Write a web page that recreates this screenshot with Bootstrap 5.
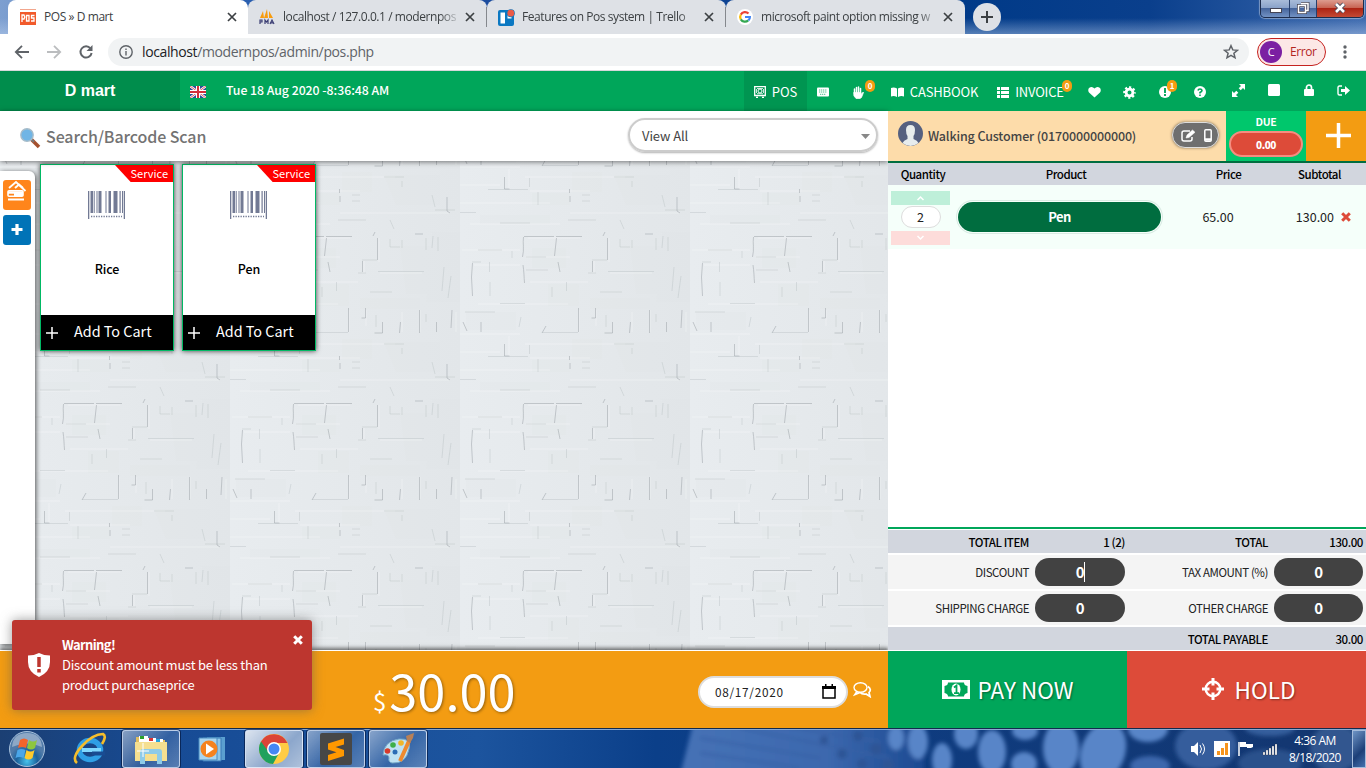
<!DOCTYPE html>
<html lang="en">
<head>
<meta charset="utf-8">
<meta name="viewport" content="width=device-width, initial-scale=1">
<title>POS » D mart</title>
<link href="https://cdn.jsdelivr.net/npm/bootstrap@5.3.0/dist/css/bootstrap.min.css" rel="stylesheet">
<style>
:root{--app:"Noto Sans CJK SC","Open Sans",sans-serif;--ui:"Open Sans","Noto Sans",sans-serif}
html,body{height:768px;overflow:hidden}
body{font-family:var(--app);font-size:13px;line-height:20px;color:#222;width:1366px}
svg{display:block;flex:none}
.t{white-space:nowrap;flex:none}
/* browser chrome */
.strip{height:34px;background:linear-gradient(180deg,rgba(255,255,255,0) 18px,rgba(190,210,240,.45) 34px),linear-gradient(90deg,#7d9fd0 0,#2a5fb0 240px,#1c4c9e 480px,#003a88 960px,#0a3f8c 1150px,#3c69ae 1366px);font-family:var(--ui);font-size:12px;color:#3c4043}
.tb{height:34px;width:239px;background:#dee1e6;border-radius:8px 8px 0 0;padding-left:16px}
.tb.cur{background:#fff;width:240px;margin-left:8px;padding-left:12px}
.tb .cap{width:178px;letter-spacing:-.43px;-webkit-mask-image:linear-gradient(90deg,#000 88%,transparent)}
.tb.cur .cap{width:175px;-webkit-mask-image:none}
.sepr{width:1px;height:20px;background:#85888d;margin-left:-1px;align-self:center;z-index:2}
.newtab{width:28px;height:28px;border-radius:50%;background:#dee1e6;margin:3px 0 0 8px}
.winbtns{width:104px;height:18px;margin:0 2px 0 auto;border:1px solid #1d2c4c;border-top:0;border-radius:0 0 5px 5px;overflow:hidden;box-shadow:0 0 1px 1px rgba(255,255,255,.4)}
.winbtns>div{background:linear-gradient(#a9bcd9 0,#8ba3ca 45%,#46659c 50%,#7292c4);border-right:1px solid #28406c}
.winbtns>.cls{background:linear-gradient(#dd9c8f 0,#c86554 45%,#ad2414 50%,#c44a34);border:0}
.bar{height:36px;background:#fff;font-family:var(--ui);font-size:14px}
.url{height:28px;width:1141px;border-radius:14px;background:#f1f3f4;margin-left:10px;letter-spacing:-.38px;color:#5f6368}
.err{width:69px;height:28px;border:1px solid #c5221f;border-radius:14px;background:#fce8e6;color:#b3261e;font-size:12px;letter-spacing:-.4px;margin-left:8px}
.ava{width:22px;height:22px;border-radius:50%;background:#7b1fa2;color:#fff;font-size:11px;line-height:22px;margin-left:2px}
/* application header */
.top{height:41px;border-top:1px solid #d6d8da;background:#00a65a;color:#fff;font-size:13px}
.brand{width:180px;background:#008d4c;font:bold 16px "Liberation Sans",sans-serif}
.top .it{display:flex;align-items:center;justify-content:center;position:relative;height:40px;padding-top:2px;flex:none}
.on{background:#009551}
.bdg{position:absolute;top:9px;width:10px;height:12px;border-radius:5px;background:#f39c12;font:bold 8px/12px var(--app);text-align:center}
/* left side */
.left{width:888px;height:617px}
.find{height:50px;background:#fff;box-shadow:0 1px 5px rgba(0,0,0,.5);position:relative;z-index:2}
.find .ph{font-size:16px;font-weight:500;color:#737373;letter-spacing:-.1px}
.sel{width:250px;height:34px;border:2px solid #ccc;border-radius:17px;box-shadow:0 1px 2px rgba(0,0,0,.3);color:#444;letter-spacing:-.1px}
.wall{height:490px;background:#e5e9ec url("data:image/svg+xml,%3Csvg xmlns='http://www.w3.org/2000/svg' width='230' height='167'%3E%3Cdefs%3E%3ClinearGradient id='g'%3E%3Cstop stop-color='%23e8ecef'/%3E%3Cstop offset='1' stop-color='%23e2e6e9'/%3E%3C/linearGradient%3E%3Cfilter id='b'%3E%3CfeGaussianBlur stdDeviation='.45'/%3E%3C/filter%3E%3C/defs%3E%3Crect width='230' height='167' fill='url(%23g)'/%3E%3Cg fill='%23dde1e4' opacity='.22'%3E%3Cpath d='M72 16h34v20H72zM170 14h44v48h-38zM88 52h31v22H88zM202 0h28v70h-34zM130 66h60v11h-60zM6 80h50v18H6zM112 107h30v20h-30zM154 110h56v30h-44zM72 128h38v12H72zM20 150h70v9H20z'/%3E%3C/g%3E%3Cg fill='none' stroke='%23fff' stroke-opacity='.3' filter='url(%23b)'%3E%3Cpath d='M2 18h58M68 6h52M66 25h44M14 33h46M70 50h58M18 72h90M150 41h42M0 102h60M65 112h100M0 120h40M70 126h60M0 138h90M110 148h110M10 159h90M49 104v20M119 78v22M136 78v16M190 78v22M172 80v20M226 80v20M149 6v24M134 29v12'/%3E%3C/g%3E%3Cg fill='none' stroke='%239aa0a6' stroke-opacity='.5' filter='url(%23b)'%3E%3Cpath d='M64 4.500h30M96 4.500h26M63.500 5c-1 6 1 12-1 20M63 33c1 6 1 12 1.500 18M96.500 6l-2 18M98 30l2 10M12.500 31l-1 14 1 19M147.500 6v22M132.500 29v11M145 0l-2 4M185 2h8M118.500 76v24M135.500 76v10h-4M152.500 90v11h-8M170.500 90l-1 11M189.500 78v23M206.500 90v10M222 78l-1 18M86 94l-4 7M21 90v10M3 90l4 9M44.500 112v12h5M109.500 124v4M110 131v6M217 132v14l3 2'/%3E%3C/g%3E%3Cg fill='none' stroke='%23b0b6bb' stroke-opacity='.35' filter='url(%23b)'%3E%3Cpath d='M0 147.500h16M12 30h9M29.500 30v10M66 25h20M66 38h22M132 28h15M148 39.500h46M160 7v8h10M172 8v8M196 6v12M203 4l-1 12M208 5v14M214 35l-2 24M221 44l-3 22M40 71.500h25M92 55v10M106.500 50v9M5 80h30M82 100.500h36M28 124.500h40M69.500 113v9M78 127v13M122 130h8M122 136h8M154 112h20M172 116v6M202 130l3 12M205 145h20M160 155l4 9M40 158h30M18 18h24M52 19v7M128 41h8M146 83v12M196 82v8M108 155h28M61 85l-2 10M140 60h22M30 50v14'/%3E%3C/g%3E%3C/svg%3E") 0 71px}
.side{width:35px;height:473px;margin-top:10px;background:#fff;border-radius:0 6px 0 0;box-shadow:1px 1px 5px rgba(0,0,0,.65);padding:9px 0 0 3px}
.side>div{width:28px;height:30px;border-radius:3px;margin-bottom:5px}
.goods{padding:3px 0 0 5px;gap:8px}
.item{width:134px;height:187px;border:1.500px solid #00b964;background:#fff;box-shadow:0 0 5px rgba(0,0,0,.75);position:relative}
.rib{position:absolute;right:0;top:0;width:58px;height:17px;background:red;clip-path:polygon(0 0,100% 0,100% 100%,27% 100%);color:#fff;font-size:11px;line-height:17px;text-align:right;padding-right:5px}
.item .nm{font-weight:500;color:#000;margin-top:40px;font-size:12.500px;letter-spacing:-.1px}
.cartb{height:35px;background:#000;color:#fff;font-size:14.400px;padding-bottom:3px}
.foot{height:77px;background:#f39c12;color:#fff;position:relative}
.wall + .foot{box-shadow:0 -1px 0 #fff,0 -3px 4px rgba(0,0,0,.55);z-index:3}
.amt{font-size:50.500px;line-height:60px;text-shadow:1px 1px 3px rgba(0,0,0,.4)}
.date{width:150px;height:32px;border:2px solid #ddd;border-radius:16px;background:#fff;color:#222}
.toastx{position:absolute;left:12px;top:-31px;width:300px;height:90px;border-radius:3px;background:#bd362f;box-shadow:0 0 12px rgba(90,90,90,.6);letter-spacing:-.23px}
.toastx b{letter-spacing:-.65px}
/* right side */
.right{width:478px;height:617px;background:#fff;position:relative;z-index:4}
.cust{height:52px;border-bottom:2px solid #006d3f}
.who{width:338px;background:#fddcaa;font-weight:500;color:#444}
.who .t{font-size:12.500px;letter-spacing:-.14px}
.edit{width:47px;height:26px;border:1px solid #ddd;border-radius:13px;background:#6f6f6f;box-shadow:0 0 3px rgba(0,0,0,.5)}
.due{width:80px;background:#00c76c;color:#fff;font-weight:700;font-size:10.500px;letter-spacing:-.3px}
.due b{display:block;width:74px;height:26px;margin:0 3px;border:2px solid #f58d80;border-radius:13px;background:#dd4b39;line-height:23px;font-size:10px;letter-spacing:-.5px}
.hd{height:22px;background:#d2d6de;font-weight:500;font-size:11.500px;letter-spacing:-.45px;color:#000}
.ln{height:64px;background:#f5fffa}
.qty .up,.qty .dn{width:59px;height:14px;background:#beefd9}
.qty .dn{background:#fddcda}
.qty .n{width:40px;height:22px;border:1px solid #ddd;border-radius:11px;background:#fff;margin:1px 0 3px;line-height:20px;font-size:12.500px}
.pen{width:203px;height:30px;border-radius:15px;background:#006d3f;color:#fff;font-weight:700;letter-spacing:-.5px;box-shadow:0 0 0 1px #f5fffa,0 0 0 2px #d9ebe3;line-height:30px}
.sum{border-top:2px solid #00a65a;padding-top:1px;gap:2px;font-size:11.500px;letter-spacing:-.42px}
.sum .rw{height:34px;background:#f4f4f4}
.sum .g{height:23px;background:#d2d6de;color:#000;font-weight:500}
.sum .lb{width:141px;text-align:right}
.sum .lb + *{margin-left:6px}
.sum .vl{width:90px;text-align:right}
.sum .lb2{width:143px;text-align:right}
.sum .lb2 + *{margin-left:6px;width:89px}
.fld{height:28px;width:90px;background:#424242;border-radius:14px;color:#fff;font-weight:700;font-size:15px;text-align:center;line-height:28px}
.act{height:77px;color:#fff;font-size:22.500px;text-shadow:1px 1px 2px rgba(0,0,0,.4)}
.act>div{padding-bottom:1px}
.pay{width:239px;background:#00a65a}.hold{width:239px;background:#dd4b39}
/* taskbar */
.task{height:40px;position:relative;color:#fff;font-family:var(--ui);overflow:hidden;background:#123f86}
.task .bg-art{position:absolute;left:0;top:0}
.task .row-in{position:relative;height:40px;border-top:1px solid #132a4d;box-shadow:inset 0 1px #8aa9d2}
.win{width:58px;height:38px;border:1px solid rgba(225,235,250,.75);border-radius:3px;background:linear-gradient(135deg,rgba(255,255,255,.48),rgba(255,255,255,.12) 55%,rgba(255,255,255,.28));margin-right:4px;box-shadow:0 0 0 1px rgba(0,15,50,.6);flex:none}
.win.hot{background:linear-gradient(135deg,rgba(255,255,255,.85),rgba(255,255,255,.5) 60%,rgba(255,255,255,.65))}
.clock{font-size:12px;line-height:17px;letter-spacing:-.55px;width:66px}
</style>
</head>
<body>
<svg width="0" height="0" class="position-absolute">
<symbol id="x" viewBox="0 0 10 10"><path d="M1 1l8 8M9 1L1 9" stroke="#3c4043" stroke-width="1.700"/></symbol>
<symbol id="bars" viewBox="0 0 37 28"><g fill="#727a94"><path d="M0 0h1.300v28H0zM2.500 0H5v22H2.500zM5.700 0h1v22h-1zM8.500 0h1v22h-1zM10.500 0h3v22h-3zM17.500 0h1v22h-1zM20.500 0h2.500v22h-2.500zM25.500 0h4v22h-4zM31.500 0h1.200v22h-1.200zM34 0h1v22h-1zM35.700 0H37v28h-1.300z"/><path d="M3 25.500h31" stroke="#727a94" stroke-width="1.500" stroke-dasharray="1.300 1.200"/></g></symbol>
</svg>

<header>
<div class="strip d-flex">
  <div class="tb cur d-flex align-items-center">
    <svg width="16" height="16" viewBox="0 0 16 16" class="me-2"><path d="M0 0h16v1H0z" fill="#f2a68d"/><path d="M0 3h16v13H0z" fill="#f15a2b"/><path d="M2 13V6h2q1.500 2 0 4H2m4.500-3.500h2.500v5.500H6.500zM14.500 6.500h-3V9h2.500v3h-3" fill="none" stroke="#fff" stroke-width="1.300"/></svg>
    <span class="cap t">POS » D mart</span><svg class="ms-2" width="10" height="10"><use href="#x"/></svg>
  </div>
  <div class="tb d-flex align-items-center" style="padding-left:11px">
    <svg width="16" height="16" viewBox="0 0 16 16" class="me-2"><path d="M4 2L1 9h4zM8 0L5 9h4zM10 2v7h4z" fill="#f89c0e"/><path d="M1 15v-4h2v2H1M6 15v-4l1.500 2L9 11v4m2 0l2-4 2 4m-3-1.200h2" fill="none" stroke="#3b3e74" stroke-width="1.200"/></svg>
    <span class="cap t">localhost / 127.0.0.1 / modernpos</span><svg class="ms-1" width="10" height="10"><use href="#x"/></svg>
  </div><i class="sepr"></i>
  <div class="tb d-flex align-items-center" style="padding-left:11px">
    <svg width="17" height="17" viewBox="0 0 17 17" style="margin-right:7px"><rect y="1" width="16" height="16" rx="2" fill="#0b78c2"/><path d="M2.500 3.500h4.500v11H2.500zM9.500 3.500h4v6h-4z" fill="#fff"/><circle cx="12.800" cy="4.200" r="4" fill="#0b78c2"/><circle cx="12.800" cy="4.200" r="3.400" fill="#eb5a46"/></svg>
    <span class="cap t">Features on Pos system | Trello</span><svg class="ms-1" width="10" height="10"><use href="#x"/></svg>
  </div><i class="sepr"></i>
  <div class="tb d-flex align-items-center" style="padding-left:11px">
    <svg width="16" height="16" viewBox="0 0 16 16" class="me-2"><circle cx="8" cy="8" r="8" fill="#fff"/><g fill="none" stroke-width="2.200"><path d="M11.500 4.600A4.800 4.800 0 0 0 3.800 5.600" stroke="#ea4335"/><path d="M3.800 5.600a5 5 0 0 0 0 4.800" stroke="#fbbc05"/><path d="M3.800 10.400a4.800 4.800 0 0 0 7.400 1" stroke="#34a853"/><path d="M8 8h4.900q0 2-1.500 3.500" stroke="#4285f4"/></g></svg>
    <span class="cap t">microsoft paint option missing w</span><svg class="ms-1" width="10" height="10"><use href="#x"/></svg>
  </div>
  <div class="newtab d-flex align-items-center justify-content-center"><svg width="12" height="12"><path d="M6 0v12M0 6h12" stroke="#3c4043" stroke-width="2"/></svg></div>
  <div class="winbtns d-flex">
    <div style="width:29px"><svg width="28" height="17"><rect x="9.500" y="8.500" width="11" height="4" fill="#fff" stroke="#445"/></svg></div>
    <div style="width:27px"><svg width="26" height="17" fill="none"><path d="M11 3.500h7v7h-2M8.500 5.500h7v7h-7z" stroke="#445" stroke-width="3"/><path d="M11 3.500h7v7h-2M8.500 5.500h7v7h-7z" stroke="#fff" stroke-width="1.500"/></svg></div>
    <div class="cls flex-fill"><svg width="46" height="17"><path d="M19 4l8 8m0-8l-8 8" stroke="#4b4b5c" stroke-width="4.500"/><path d="M19 4l8 8m0-8l-8 8" stroke="#fff" stroke-width="2.500"/></svg></div>
  </div>
</div>
<div class="bar d-flex align-items-center">
  <svg width="98" height="36" fill="none" stroke-width="1.800"><path d="M29 18H16m6-6.200L15.800 18l6.200 6.200" stroke="#5f6368"/><path d="M47 18h13m-6-6.200L60.200 18 54 24.200" stroke="#bbbdbf"/><path d="M90.500 14.500A5.600 5.600 0 1 0 91.600 19" stroke="#5f6368" stroke-width="2"/><path d="M92.500 11v6h-6z" fill="#5f6368"/></svg>
  <div class="url d-flex align-items-center">
    <svg width="14" height="14" style="margin:0 9px 0 11px" fill="none" stroke="#5f6368" stroke-width="1.400"><circle cx="7" cy="7" r="6.200"/><path d="M7 6v4.500M7 3.500v1.500"/></svg>
    <span class="t"><span style="color:#202124">localhost</span>/modernpos/admin/pos.php</span>
    <svg width="16" height="16" class="ms-auto" style="margin-right:10px" viewBox="0 0 16 16" fill="none" stroke="#5f6368" stroke-width="1.500"><path d="M8 1.700l1.800 4.200 4.600.4-3.500 3 1.100 4.500L8 11.400l-4 2.400 1.100-4.500-3.500-3 4.600-.4z"/></svg>
  </div>
  <div class="err d-flex align-items-center"><span class="ava text-center">C</span><span class="t ms-2">Error</span></div>
  <svg width="4" height="14" style="margin-left:17px" fill="#5f6368"><circle cx="2" cy="2" r="1.700"/><circle cx="2" cy="7" r="1.700"/><circle cx="2" cy="12" r="1.700"/></svg>
</div>
</header>

<nav class="top d-flex">
  <div class="brand d-flex align-items-center justify-content-center">D mart</div>
  <div class="it" style="width:36px"><svg width="16" height="12" viewBox="0 0 16 12"><path fill="#2d4a96" d="M0 0h16v12H0z"/><path d="M0 0l16 12M16 0L0 12" stroke="#fff" stroke-width="2.400"/><path d="M0 0l16 12M16 0L0 12" stroke="#d33" stroke-width=".8"/><path d="M8 0v12M0 6h16" stroke="#fff" stroke-width="4"/><path d="M8 0v12M0 6h16" stroke="#d22f3b" stroke-width="2"/></svg></div>
  <div class="it justify-content-start" style="width:528px;padding-left:10px;padding-bottom:4px;font-size:12.300px;font-weight:500;letter-spacing:-.04px">Tue 18 Aug 2020 -8:36:48 AM</div>
  <div class="it on" style="width:63px"><svg width="12" height="12" viewBox="0 0 12 12" fill="none" stroke="#fff" style="margin-right:6px"><path d="M.7.700h10.600v8.800H.7zM2 11.500h2m4 0h2" stroke-width="1.300"/><circle cx="6" cy="5" r="2"/><path d="M2.500 3v4M9.500 3v4M3 2.500h6M3 7.700h6" stroke-width=".8"/></svg>POS</div>
  <div class="it" style="width:33px"><svg width="12" height="10" viewBox="0 0 12 10" style="margin-right:1px"><rect y=".5" width="12" height="9" rx="1" fill="#fff"/><path d="M2 3h8M2 5h8M3 7.300h6" stroke="#00a65a" stroke-opacity=".7" stroke-dasharray="1.200 .7"/></svg></div>
  <div class="it" style="width:36px"><svg width="12" height="13" viewBox="0 0 12 13" fill="none" stroke="#fff" stroke-linecap="round"><path d="M2.500 3v5M4.500 1.500v6M6.500 1v7M8.500 2.500v5" stroke-width="1.500"/><path d="M2 6.500h7l.5 2L11 6l.5.500-2 5-1.500 1H4L2 10z" fill="#fff" stroke-width=".7"/></svg><span class="bdg" style="left:25px">0</span></div>
  <div class="it" style="width:117px;letter-spacing:-.15px"><svg width="13" height="10" viewBox="0 0 13 10" style="margin-right:6px"><path d="M0 1q3-1 6 .5V10Q3 8.500 0 9.500zM13 1q-3-1-6 .5V10q3-1.500 6-.5z" fill="#fff"/></svg>CASHBOOK</div>
  <div class="it" style="width:75px;letter-spacing:-.2px"><svg width="12" height="11" fill="#fff" style="margin-right:6px"><path d="M0 0h3v3H0zM4 0h8v3H4zM0 4h3v3H0zM4 4h8v3H4zM0 8h3v3H0zM4 8h8v3H4z"/></svg>INVOICE<span class="bdg" style="left:69px">0</span></div>
  <div class="it" style="width:35px;margin-left:9px"><svg width="13" height="12" viewBox="0 0 13 12"><path d="M6.500 11.500L1 6.500Q-.5 4 1 2 4-.5 6.500 2.600 9-.5 12 2q1.500 2 0 4.500z" fill="#fff"/></svg></div>
  <div class="it" style="width:35px"><svg width="13" height="13" viewBox="0 0 13 13"><circle cx="6.500" cy="6.500" r="3.400" fill="none" stroke="#fff" stroke-width="2.800"/><circle cx="6.500" cy="6.500" r="5.300" fill="none" stroke="#fff" stroke-width="2" stroke-dasharray="2.200 1.960" stroke-dashoffset="1.100"/></svg></div>
  <div class="it" style="width:35px"><svg width="12" height="12"><circle cx="6" cy="6" r="6" fill="#fff"/><path d="M6 2v5M6 8v2" stroke="#00a65a" stroke-width="1.900"/></svg><span class="bdg" style="left:20px">1</span></div>
  <div class="it" style="width:35px"><svg width="12" height="12" fill="none"><circle cx="6" cy="6" r="6" fill="#fff"/><path d="M4 4.500Q4.300 3 6 3t2 1.500Q8 5.500 6 6.500V7.500M6 8.500v1.500" stroke="#00a65a" stroke-width="1.600"/></svg></div>
  <div class="it" style="width:35px;margin-left:4px;padding-bottom:4px"><svg width="13" height="13" fill="#fff"><path d="M7 0h6v6l-2-2-2.300 2.300-2-2L9 2zM6 13H0V7l2 2 2.300-2.300 2 2L4 11z"/></svg></div>
  <div class="it" style="width:35px;padding-bottom:4px"><svg width="12" height="12"><rect width="12" height="12" rx="1.500" fill="#fff"/></svg></div>
  <div class="it" style="width:35px;padding-bottom:4px"><svg width="10" height="12"><rect y="5" width="10" height="7" rx="1" fill="#fff"/><path d="M2.500 6V3.500a2.500 2.500 0 0 1 5 0V6" fill="none" stroke="#fff" stroke-width="1.700"/></svg></div>
  <div class="it" style="width:35px;padding-bottom:4px"><svg width="13" height="11"><path d="M5 1H2.500Q1 1 1 2.500v6Q1 10 2.500 10H5" fill="none" stroke="#fff" stroke-width="1.400"/><path d="M4 4h4V1l5 4.500L8 10V7H4z" fill="#fff"/></svg></div>
</nav>

<main class="d-flex">
<section class="left">
  <div class="find d-flex align-items-center">
    <svg width="22" height="22" viewBox="0 0 22 22" style="margin:3px 0 0 19px"><path d="M12 12l8 8" stroke="#a5502d" stroke-width="3.600"/><path d="M12 12l3 3" stroke="#777" stroke-width="2"/><circle cx="8" cy="8" r="6.200" fill="#70b5e5" stroke="#a7bcc9" stroke-width="1.400"/></svg>
    <span class="ph t" style="margin-left:5px">Search/Barcode Scan</span>
    <div class="sel d-flex align-items-center justify-content-between ms-auto" style="margin:0 10px 2px 0;padding:2px 6px 0 12px"><span>View All</span><svg width="9" height="5"><path d="M0 0h9L4.500 5z" fill="#888"/></svg></div>
  </div>
  <div class="wall d-flex">
    <aside class="side">
      <div style="background:#ff851b"><svg width="28" height="30" fill="none" stroke="#fff"><path d="M6 8l7-6 9.500 9" stroke-width="1.800"/><path d="M12 8l4-3.500 4 3.500" stroke-width="2"/><rect x="5" y="10.800" width="15" height="5.500" rx="1" stroke-width="1.600"/><path d="M5 12.500h15" stroke-width="2.500"/><path d="M11 14.500h9" stroke-width="3"/><path d="M5 19.500h16" stroke-width="2"/></svg></div>
      <div style="background:#0073b7"><svg width="28" height="30"><path d="M14 9v11M8.500 14.500h11" stroke="#fff" stroke-width="3.200"/></svg></div>
    </aside>
    <div class="goods d-flex">
      <div class="item d-flex flex-column align-items-center"><span class="rib">Service</span><svg width="37" height="28" style="margin-top:26px;margin-right:1px"><use href="#bars"/></svg><div class="nm">Rice</div><div class="cartb d-flex align-items-center w-100 mt-auto"><svg width="12" height="12" style="margin:3px 16px 0 5px"><path d="M6 0v12M0 6h12" stroke="#fff" stroke-width="1.500"/></svg>Add To Cart</div></div>
      <div class="item d-flex flex-column align-items-center"><span class="rib">Service</span><svg width="37" height="28" style="margin-top:26px;margin-right:1px"><use href="#bars"/></svg><div class="nm">Pen</div><div class="cartb d-flex align-items-center w-100 mt-auto"><svg width="12" height="12" style="margin:3px 16px 0 5px"><path d="M6 0v12M0 6h12" stroke="#fff" stroke-width="1.500"/></svg>Add To Cart</div></div>
    </div>
  </div>
  <div class="foot d-flex align-items-center">
    <div class="d-flex align-items-baseline" style="margin-left:373px;margin-top:-1px"><span class="t" style="font-size:24px;margin-right:3px">$</span><span class="amt t">30.00</span></div>
    <div class="date d-flex align-items-center justify-content-between ms-auto" style="margin-top:4px;padding:0 10px 0 15px;font-size:12px;letter-spacing:.6px"><span style="letter-spacing:.7px;margin-right:-10px"><span style="font-size:11.800px">08/17/2020</span></span><svg width="14" height="15"><path d="M1 3h12v11H1z" fill="none" stroke="#000" stroke-width="1.500"/><path d="M0 2h14v3H0zM3 0h1.500v3H3zM9.500 0H11v3H9.500z"/></svg></div>
    <svg width="19" height="16" viewBox="0 0 19 16" style="margin:1px 16px 0 5px" fill="none" stroke="#fff" stroke-width="1.400"><ellipse cx="7.500" cy="5.500" rx="6.500" ry="4.700"/><path d="M4 9.500l-2 3 5-2M15 4.500q4 3 1 6l1 4-4-2.500q-4 .500-6-1.500" stroke-width="1.700"/></svg>
    <div class="toastx d-flex align-items-center">
      <svg width="22" height="24" viewBox="0 0 22 24" style="margin:0 12px 0 16px"><path d="M0 2.500Q6 2.500 11 0q5 2.500 11 2.500V9q0 10-11 15Q0 19 0 9z" fill="#fff"/><path d="M11 4v10M11 16v3.500" stroke="#bd362f" stroke-width="3.500"/></svg>
      <div class="t" style="padding-bottom:1px"><b>Warning!</b><br>Discount amount must be less than<br>product purchaseprice</div>
      <svg width="10" height="10" class="position-absolute" style="right:9px;top:15px"><path d="M1.200 1.200l7.600 7.600M8.800 1.200L1.200 8.800" stroke="#fff" stroke-width="3"/></svg>
    </div>
  </div>
</section>

<section class="right d-flex flex-column">
  <div class="cust d-flex">
    <div class="who d-flex align-items-center"><svg width="25" height="25" viewBox="0 0 25 25" style="margin:-6px 5px 0 10px"><circle cx="12.500" cy="12.500" r="12.500" fill="#556080"/><path d="M4.500 22q1-2.500 5-4v-3Q8 13 8 9q0-5 4.500-5T17 9q0 4-1.500 6v3q4 1.500 5 4-8 6-16 0z" fill="#e7eced"/></svg><span class="t">Walking Customer (0170000000000)</span>
      <div class="edit d-flex align-items-center ms-auto" style="margin:0 7px 2px 0"><svg width="15" height="13" viewBox="0 0 15 13" style="margin:0 8px 0 8px" fill="none" stroke="#fff" stroke-width="1.500"><path d="M9 2H3Q1 2 1 4v6q0 2 2 2h6q2 0 2-2V8"/><path d="M5 9l1-3 5.500-5L14 3.300 8 8.500z" fill="#fff" stroke-width=".5"/></svg><svg width="8" height="13"><rect x=".8" y=".8" width="6.400" height="11.400" rx="1" fill="none" stroke="#fff" stroke-width="1.500"/><path d="M1 10.500h6" stroke="#fff" stroke-width="2.500"/></svg></div>
    </div>
    <div class="due text-center"><div style="height:20px;line-height:22px">DUE</div><b>0.00</b></div>
    <div class="flex-fill d-flex align-items-center justify-content-center" style="background:#f39c12;padding:0 0 2px 5px"><svg width="25" height="25"><path d="M12.500 0v25M0 12.500h25" stroke="#fff" stroke-width="3.500"/></svg></div>
  </div>
  <div class="hd d-flex align-items-center text-center"><span style="width:70px">Quantity</span><span style="width:216px">Product</span><span style="width:109px">Price</span><span style="width:73px">Subtotal</span></div>
  <div class="ln d-flex align-items-center">
    <div class="qty d-flex flex-column align-items-center text-center" style="margin:2px 0 0 3px"><div class="up"><svg width="59" height="14" fill="none" stroke="#fff" stroke-width="1.500"><path d="M26.500 9l3-3 3 3"/></svg></div><div class="n">2</div><div class="dn"><svg width="59" height="14" fill="none" stroke="#fff" stroke-width="1.500"><path d="M26.500 5l3 3 3-3"/></svg></div></div>
    <div class="pen text-center" style="margin-left:8px">Pen</div>
    <span class="t" style="width:114px;text-align:center;font-size:12.500px">65.00</span>
    <span class="t text-end" style="width:59px;font-size:12.500px">130.00</span>
    <svg width="10" height="10" style="margin-left:7px"><path d="M1.200 1.200l7.600 7.600M8.800 1.200L1.200 8.800" stroke="#dd4b39" stroke-width="3"/></svg>
  </div>
  <div class="sum d-flex flex-column mt-auto">
    <div class="rw g d-flex align-items-center"><span class="lb">TOTAL ITEM</span><span class="vl">1 (2)</span><span class="lb2">TOTAL</span><span class="vl">130.00</span></div>
    <div class="rw d-flex align-items-center"><span class="lb">DISCOUNT</span><div class="fld d-flex justify-content-center align-items-center"><span>0</span><i style="width:1px;height:20px;background:#fff;margin-right:-1px"></i></div><span class="lb2">TAX AMOUNT (%)</span><div class="fld">0</div></div>
    <div class="rw d-flex align-items-center"><span class="lb">SHIPPING CHARGE</span><div class="fld">0</div><span class="lb2">OTHER CHARGE</span><div class="fld">0</div></div>
    <div class="rw g d-flex align-items-center"><span class="lb"></span><span class="vl"></span><span class="lb2">TOTAL PAYABLE</span><span class="vl">30.00</span></div>
  </div>
  <div class="act d-flex" style="margin-top:1px">
    <div class="pay d-flex align-items-center justify-content-center"><svg width="28" height="19" viewBox="0 0 28 19" style="margin-right:8px"><path d="M0 0h28v19H0z" fill="#fff"/><path d="M6 2.500h16q0 3 3.500 3.500v7q-3.500.500-3.500 3.500H6q0-3-3.500-3.500V6Q6 5.500 6 2.500z" fill="#00a65a"/><ellipse cx="14" cy="9.500" rx="4.500" ry="6" fill="#fff"/><path d="M12 7.500l2.500-2V13M12 13.200h5" stroke="#00a65a" stroke-width="1.800" fill="none"/></svg>PAY NOW</div>
    <div class="hold d-flex align-items-center justify-content-center" style="padding-left:4px"><svg width="22" height="22" viewBox="0 0 22 22" style="margin-right:11px" fill="none" stroke="#fff"><circle cx="11" cy="11" r="7.300" stroke-width="2.400"/><path d="M11 0v7.500M11 14.500V22M0 11h7.500M14.500 11H22" stroke-width="3"/></svg>HOLD</div>
  </div>
</section>
</main>

<footer class="task">
  <svg class="bg-art" width="1366" height="40">
    <defs><linearGradient id="tb"><stop stop-color="#1b3f73"/><stop offset=".12" stop-color="#174b95"/><stop offset=".35" stop-color="#1c549e"/><stop offset=".48" stop-color="#0b3f89"/><stop offset="1" stop-color="#14366f"/></linearGradient><linearGradient id="pg"><stop stop-color="#4672b6"/><stop offset=".6" stop-color="#3c68ae"/><stop offset="1" stop-color="#1c4a92"/></linearGradient><filter id="bl"><feGaussianBlur stdDeviation="2"/></filter></defs>
    <rect width="1366" height="40" fill="url(#tb)"/>
    <g filter="url(#bl)" fill="#5885c8"><path d="M694-8h230v56H680z" fill="url(#pg)"/><path d="M700 10l120 20M700 25l100 15M740 0l150 30M760-6l120 20" stroke="#3761a5" stroke-width="2"/><g fill="#2d5495"><circle cx="824" cy="12" r="4"/><circle cx="842" cy="26" r="5"/><circle cx="858" cy="8" r="5"/><circle cx="876" cy="21" r="6"/><circle cx="888" cy="37" r="6"/><circle cx="862" cy="36" r="5"/></g>
    <ellipse cx="896" cy="10" rx="8" ry="12"/><ellipse cx="918" cy="14" rx="10" ry="17"/><ellipse cx="942" cy="32" rx="10" ry="17"/><ellipse cx="966" cy="6" rx="12" ry="15"/><ellipse cx="992" cy="24" rx="14" ry="22"/><ellipse cx="1025" cy="3" rx="13" ry="9"/><ellipse cx="1024" cy="36" rx="13" ry="12"/><ellipse cx="1061" cy="20" rx="18" ry="27"/><ellipse cx="1103" cy="24" rx="22" ry="31" transform="rotate(20 1103 24)"/><ellipse cx="1148" cy="1" rx="20" ry="13"/><ellipse cx="1150" cy="38" rx="20" ry="10" fill="#3c68ad"/><ellipse cx="1206" cy="18" rx="31" ry="24" fill="#345d9c"/><ellipse cx="1270" cy="35" rx="32" ry="14" fill="#2c518c"/><ellipse cx="1270" cy="0" rx="25" ry="8" fill="#365f9d"/><ellipse cx="1335" cy="20" rx="25" ry="24" fill="#30568f"/></g>
  </svg>
  <div class="row-in d-flex align-items-center">
    <svg width="38" height="38" viewBox="0 0 38 38" style="margin-left:8px"><defs><radialGradient id="orb" cy=".85"><stop stop-color="#48c3ed"/><stop offset=".6" stop-color="#1c619b"/><stop offset="1" stop-color="#507aa8"/></radialGradient></defs><circle cx="19" cy="19" r="17.500" fill="url(#orb)" stroke="#a8c1dc"/><path d="M4 17Q5 3 19 3t15 14Q19 10 4 17z" fill="#fff" opacity=".35"/><path d="M12 10q4-3 8 0l-2 8q-4-2-8 0z" fill="#f2642b"/><path d="M21 10q4 3 8 0l-2 8q-4 3-8 0z" fill="#8dc63f"/><path d="M9.500 20q4-2 8 0l-2 8q-4-2-8 0z" fill="#4aa6e8"/><path d="M18.500 20q4 3 8 0l-2 8q-4 3-8 0z" fill="#ffca2c"/></svg>
    <svg width="34" height="34" viewBox="0 0 34 34" style="margin:0 15px 0 27px" fill="none"><ellipse cx="17" cy="18" rx="10.500" ry="9.500" stroke="#2f9fe6" stroke-width="5.500"/><path d="M9 18h19" stroke="#80d8ff" stroke-width="4"/><path d="M19 21.500h13" stroke="#194b91" stroke-width="4"/><path d="M4 31Q-2 26 9 14 20 2 30 2q4 2-1 10" stroke="#f5bd2c" stroke-width="2.600"/></svg>
    <div class="win d-flex align-items-center justify-content-center"><svg width="34" height="30" viewBox="0 0 34 30"><path d="M2 3h10l2 3h17v21H2z" fill="#e0bd5e"/><path d="M5 2h9v8H5zM14 4h8v7h-8zM21 5h8v7h-8z" fill="#fff"/><path d="M6 2h4v3H6z" fill="#2ca02c"/><path d="M15 4h4v3h-4z" fill="#d33"/><path d="M22 5h4v3h-4z" fill="#27a2dc"/><path d="M1 8h32v19H1z" fill="#f5df90"/><path d="M6 30V18q0-3 3-3h16q3 0 3 3v12h-5V20H11v10z" fill="#8ecbe8"/><path d="M9 9v14M3 17h12" stroke="#fff"/></svg></div>
    <svg width="28" height="28" viewBox="0 0 28 28" style="margin:0 19px 0 14px"><path d="M9 2h18v23H9z" fill="#5a9fd0"/><path d="M5 3h18v23H5z" fill="#8fc6e8" stroke="#3979b5"/><path d="M1 3h18v22H1z" fill="#a9d5ef" stroke="#498abf"/><circle cx="11" cy="14" r="8.500" fill="#f5831f"/><path d="M8 8.500l8 5.500-8 5.500z" fill="#fff"/></svg>
    <div class="win hot d-flex align-items-center justify-content-center"><svg width="30" height="30" viewBox="0 0 30 30"><circle cx="15" cy="15" r="15" fill="#fc4"/><path d="M15 15L2 7.500A15 15 0 0 0 14 30l6-11z" fill="#1fa15d"/><path d="M2 7.500A15 15 0 0 1 28.500 9H15l-6 8z" fill="#db4437"/><circle cx="15" cy="15" r="7" fill="#fff"/><circle cx="15" cy="15" r="5.500" fill="#4587f3"/></svg></div>
    <div class="win d-flex align-items-center justify-content-center"><svg width="32" height="32"><rect width="32" height="32" rx="2" fill="#474747"/><path d="M24 5.500v6L15.500 14l8.500 3v6L8 28v-6l8.500-2.800L8 16.500v-6z" fill="#ff9800"/></svg></div>
    <div class="win d-flex align-items-center justify-content-center"><svg width="34" height="32" viewBox="0 0 34 32"><path d="M2 22Q3 8 18 6q13-1 10 10-3 15-17 14-4-1-3-5 0-4-6-3z" fill="#bfe2f3" stroke="#76a9c8"/><circle cx="6.500" cy="18" r="2.800" fill="#d93a2b"/><circle cx="12" cy="12" r="2.800" fill="#3daf48"/><circle cx="20" cy="10" r="2.800" fill="#f0b629"/><circle cx="14" cy="19" r="2.500" fill="#2b6cb5"/><path d="M19 28L28 8" stroke="#ed8a2f" stroke-width="4"/><path d="M26 8l-1-5 8-3-1 5-3 5z" fill="#b88057"/></svg></div>
    <div class="d-flex align-items-center ms-auto">
      <svg width="115" height="20" viewBox="0 0 115 20" style="margin-right:-3px"><path d="M13 7h3l4-4v14l-4-4h-3z" fill="#fff"/><path d="M22 6q3 4 0 8M24.500 4.500q4 5.500 0 11" fill="none" stroke="#fff"/><path d="M36 2h16v16H36z" fill="#fff"/><path d="M39 12h3v4h-3zM43 9h3v7h-3zM47 4h3v12h-3z" fill="#f7941d"/><path d="M61 3v14" stroke="#fff" stroke-width="1.500"/><path d="M62 3h6v2h7v3l-2 1h-4V8h-7z" fill="#fff"/><path d="M85 13h2v3h-2zM88 11h2v5h-2zM91 9h2v7h-2zM94 7h2v9h-2zM97 5h2v11h-2z" fill="#fff" stroke="#223" stroke-width=".3"/></svg>
      <div class="clock text-center" style="margin:0 4px 0 -8px">4:36 AM<br>8/18/2020</div>
      <div style="width:14px;height:38px;border:1px solid #a5bcdb;background:linear-gradient(135deg,#6e94c5,#1c3f78 60%,#4471ae)"></div>
    </div>
  </div>
</footer>
<script src="https://cdn.jsdelivr.net/npm/bootstrap@5.3.0/dist/js/bootstrap.bundle.min.js"></script>
</body>
</html>
